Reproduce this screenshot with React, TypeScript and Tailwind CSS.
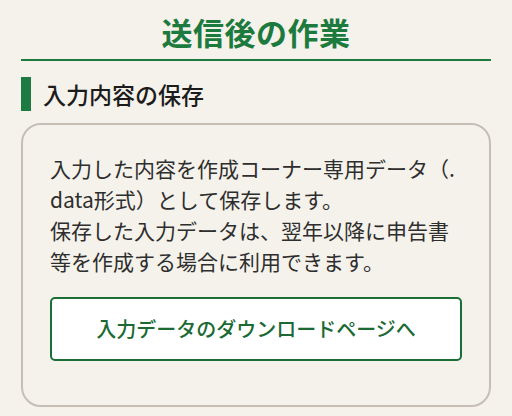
export default function App() {
  return (
    <div className="min-h-[416px] w-full bg-[#f5f2eb] px-[21px] pt-[12px] font-['Noto_Sans_CJK_JP','Noto_Sans',sans-serif] text-[#222]">
      {/* page title */}
      <h1 className="border-b-2 border-[#1d7a3e] pb-[7px] text-center text-[31px] leading-[40px] font-bold tracking-[0.5px] text-[#1d7a3e]">
        送信後の作業
      </h1>

      {/* section heading */}
      <div className="mt-[16px] flex items-center gap-[12px]">
        <div className="h-[34px] w-[10px] bg-[#1e7a43]" />
        <h2 className="text-[23px] leading-[34px] font-medium text-[#1c1c1c]">入力内容の保存</h2>
      </div>

      {/* card */}
      <div className="mt-[12px] rounded-[20px] border-2 border-[#c6bfb5] px-[27px] pt-[28px] pb-[44px]">
        <p className="text-[21px] leading-[31px] whitespace-nowrap text-[#2e2e2e]">
          入力した内容を作成コーナー専用データ（.
          <br />
          data形式）として保存します。
          <br />
          保存した入力データは、翌年以降に申告書
          <br />
          等を作成する場合に利用できます。
        </p>
        <button className="mt-[20px] flex h-[64px] w-full items-center justify-center rounded-[5px] border-2 border-[#1b6f36] bg-white text-[20px] font-medium text-[#1b6a33]">
          入力データのダウンロードページへ
        </button>
      </div>
    </div>
  )
}
